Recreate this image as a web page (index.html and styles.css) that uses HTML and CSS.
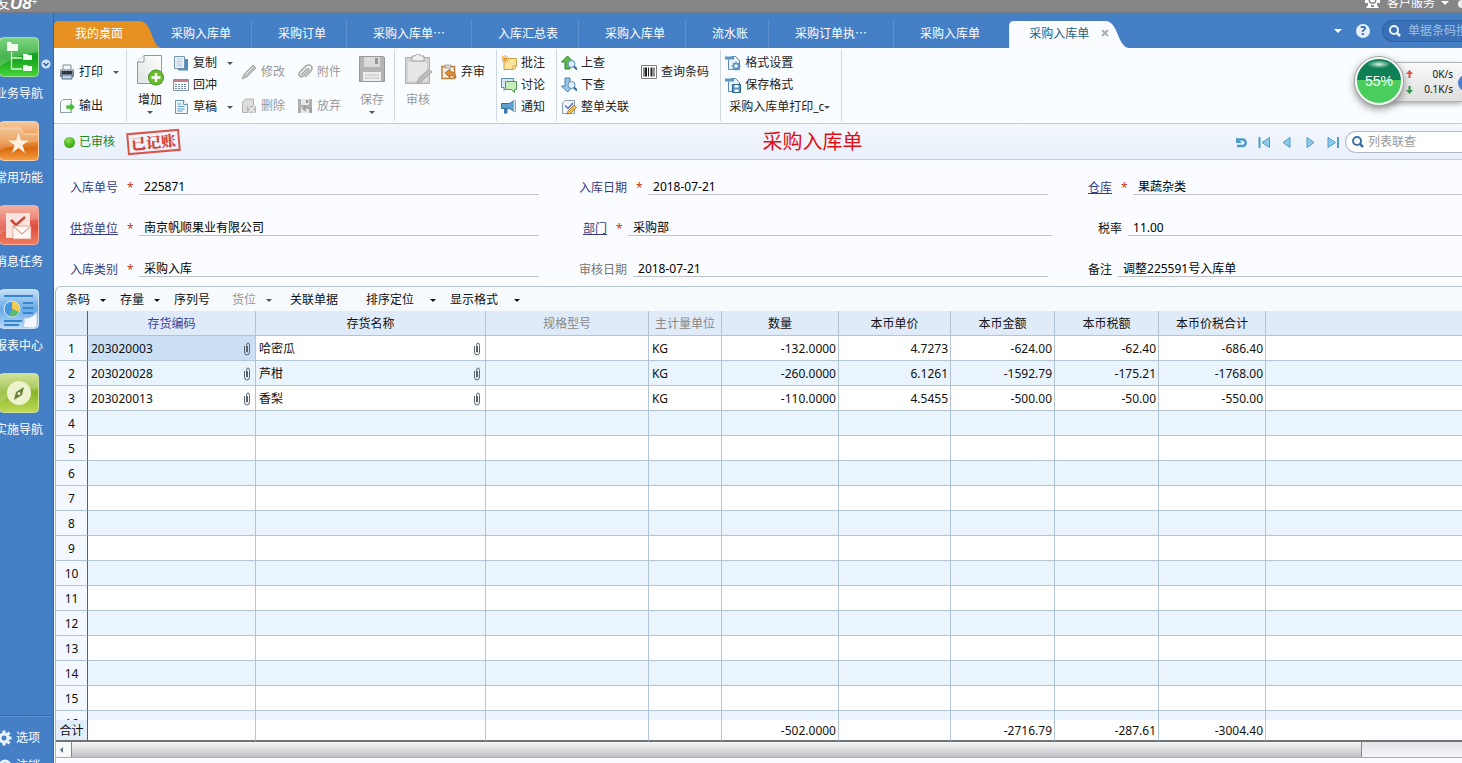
FILE: index.html
```html
<!DOCTYPE html>
<html lang="zh-CN">
<head>
<meta charset="utf-8">
<title>采购入库单</title>
<link rel="stylesheet" href="styles.css">
</head>
<body>
<header class="topbar">
  <div class="brand">友<b>U8</b><sup>+</sup></div>
  <button class="service"><svg width="17" height="16" viewBox="0 0 17 16"><path d="M1 2h3v-2h9v2h3v6h-3v2l2 3H2l2-3V8H1z" fill="#fff"/><circle cx="8.500" cy="5" r="4" fill="#868686"/><circle cx="8.500" cy="5" r="2.500" fill="#fff"/><path d="M7 11h3" stroke="#868686" stroke-width="2"/></svg>客户服务<i class="caret light"></i></button>
  <span class="avatar"></span>
</header>
<div class="shell">
<aside class="side">
  <nav class="side-nav">
    <a href="#"><svg width="40" height="40" viewBox="0 0 40 40"><defs><linearGradient id="g1" x2="0" y2="1"><stop offset="0" stop-color="#5cca5e"/><stop offset=".5" stop-color="#12a01c"/><stop offset="1" stop-color="#46d53a"/></linearGradient></defs><rect x=".5" y=".5" width="39" height="39" rx="4" fill="url(#g1)" stroke="#9fe09b"/><path d="M1 1h38v14Q20 17 1 29z" fill="#fff" opacity=".22"/><path d="M8 5h4l1 2h6v7H8zM24 17h4l1 1h4v5h-9zM24 28h4l1 1h4v5h-9z" fill="#f1ffef"/><path d="M12.500 15v17H23M12.500 21H23" fill="none" stroke="#d5f5d2" stroke-width="1.300"/></svg>业务导航</a>
    <a href="#"><svg width="40" height="40" viewBox="0 0 40 40"><defs><linearGradient id="g2" x2="0" y2="1"><stop offset="0" stop-color="#f5c9a0"/><stop offset=".5" stop-color="#e98f3c"/><stop offset=".7" stop-color="#da6a10"/><stop offset="1" stop-color="#f7a043"/></linearGradient></defs><rect x=".5" y=".5" width="39" height="39" rx="4" fill="url(#g2)" stroke="#f6d0ab"/><path d="M1 7h20l4 6h14v8Q18 22 1 29z" fill="#fff" opacity=".2"/><path d="M1 7h20l4 6h14" fill="none" stroke="#f8d8b6"/><path d="M19.500 12l2.500 7.500h8l-6.500 4.500 2.500 8-6.500-5-6.500 5 2.500-8L9 19.500h8z" fill="#fff1df"/></svg>常用功能</a>
    <a href="#"><svg width="40" height="40" viewBox="0 0 40 40"><defs><linearGradient id="g3" x2="0" y2="1"><stop offset="0" stop-color="#f3a091"/><stop offset=".55" stop-color="#de4d3c"/><stop offset="1" stop-color="#f17d63"/></linearGradient></defs><rect x=".5" y=".5" width="39" height="39" rx="4" fill="url(#g3)" stroke="#f3aa9c"/><path d="M1 1h38v13Q18 16 1 30z" fill="#fff" opacity=".18"/><path d="M7 8h24v25H7z" fill="#f9e4df"/><path d="M12 15l5 5 9-8" fill="none" stroke="#cb4939" stroke-width="2.500"/><path d="M14 21h18v13H14z" fill="#fff6f2" stroke="#d88d80" stroke-width=".7"/><path d="M14 21l9 8 9-8" fill="none" stroke="#c98076"/></svg>消息任务</a>
    <a href="#"><svg width="40" height="40" viewBox="0 0 40 40"><defs><linearGradient id="g4" x2="0" y2="1"><stop offset="0" stop-color="#c5e0f8"/><stop offset=".5" stop-color="#66a9e6"/><stop offset="1" stop-color="#b9dbf8"/></linearGradient></defs><rect x=".5" y=".5" width="39" height="39" rx="4" fill="url(#g4)" stroke="#cae1f6"/><path d="M5 7h29M24 14h10M24 19h10M24 24h10M5 32h18M5 36h15" stroke="#3b85cf" stroke-width="2"/><circle cx="13" cy="20" r="8" fill="#4597e0" stroke="#e4f2ff"/><path d="M13 20V12a8 8 0 0 1 7 11z" fill="#f2ca4e"/><path d="M13 20l7 3q-3 6-10 4z" fill="#5fba72"/><path d="M24 38q2-4 1-9 8 1 13-6v12q0 4-4 4z" fill="#f2f8fe" stroke="#9dbddd" stroke-width=".6"/></svg>报表中心</a>
    <a href="#"><svg width="40" height="40" viewBox="0 0 40 40"><defs><linearGradient id="g5" x2="0" y2="1"><stop offset="0" stop-color="#c8dd83"/><stop offset=".5" stop-color="#8bb52b"/><stop offset="1" stop-color="#c0da54"/></linearGradient></defs><rect x=".5" y=".5" width="39" height="39" rx="4" fill="url(#g5)" stroke="#cfdf9c"/><path d="M1 1h38v14Q18 17 1 29z" fill="#fff" opacity=".18"/><circle cx="20" cy="20" r="12" fill="#eef3cf"/><path d="M25 14l-2 8-8 5 2-8z" fill="#66803a"/><circle cx="20" cy="20.500" r="1.500" fill="#eef3cf"/></svg>实施导航</a>
  </nav>
  <button class="side-more" aria-label="展开"><svg width="10" height="10" viewBox="0 0 10 10"><circle cx="5" cy="5" r="4.500" fill="#cfe3f8"/><path d="M2.500 4L5 6.500 7.500 4" fill="none" stroke="#2b609e" stroke-width="1.500"/></svg></button>
  <div class="side-foot">
    <a href="#"><svg width="14" height="16" viewBox="0 0 14 16"><circle cx="4" cy="8" r="4" fill="none" stroke="#eaf4ff" stroke-width="3"/><path d="M4 .5v3M4 12.500v3M7.500 4.500l2-2M7.500 11.500l2 2M8.500 8h3" stroke="#eaf4ff" stroke-width="3"/></svg>选项</a>
    <a href="#"><svg width="14" height="16" viewBox="0 0 14 16"><circle cx="5" cy="8" r="5" fill="none" stroke="#eaf4ff" stroke-width="3"/></svg>注销</a>
  </div>
</aside>
<main class="main">
  <div class="tabstrip">
    <nav class="tabs">
      <button class="tab home">我的桌面</button>
      <button class="tab">采购入库单</button>
      <button class="tab">采购订单</button>
      <button class="tab long">采购入库单…</button>
      <button class="tab">入库汇总表</button>
      <button class="tab">采购入库单</button>
      <button class="tab">流水账</button>
      <button class="tab long">采购订单执…</button>
      <button class="tab last">采购入库单</button>
      <button class="tab active">采购入库单<svg width="8" height="8" viewBox="0 0 8 8"><path d="M1 1l6 6M7 1L1 7" stroke="#a9b0b6" stroke-width="2"/></svg></button>
    </nav>
    <div class="strip-tools">
      <button aria-label="更多标签"><i class="caret light"></i></button>
      <button aria-label="帮助" class="help">?</button>
      <label class="search dark"><svg width="14" height="14" viewBox="0 0 14 14"><circle cx="6" cy="6" r="4" fill="none" stroke="#eaf4ff" stroke-width="2"/><path d="M9 9l3 3" stroke="#eaf4ff" stroke-width="2.500"/></svg><input type="text" placeholder="单据条码搜索" aria-label="单据条码搜索"></label>
    </div>
  </div>

  <div class="ribbon">
    <div class="group print">
      <div class="two">
        <button class="tool"><svg width="16" height="16" viewBox="0 0 16 16"><path d="M4 1h8v5H4z" fill="#f4f7fa" stroke="#7d8894"/><path d="M1 5h14v8H1z" fill="#7d8996"/><path d="M1 5h14v2H1z" fill="#a5afb9"/><path d="M3 7h10v3H3z" fill="#2f363d"/><path d="M3 11h10v4H3z" fill="#b9d2ec" stroke="#5c6c7e"/></svg>打印<i class="caret"></i></button>
        <button class="tool"><svg width="16" height="16" viewBox="0 0 16 16"><path d="M4 1.500h8.500v13H1.500V4z" fill="#f6fafc" stroke="#8ba0b0"/><path d="M7 7h4V4l5 5-5 5v-3H7z" fill="#4bbb3b" stroke="#dff3da" stroke-width=".7"/></svg>输出</button>
      </div>
    </div>
    <div class="group edit">
      <button class="big"><svg width="28" height="32" viewBox="0 0 28 32"><defs><linearGradient id="pg" x1="1" x2="0" y2="1"><stop offset="0" stop-color="#fff"/><stop offset="1" stop-color="#dfe3e3"/></linearGradient></defs><path d="M8 1.500h17.500v28h-24V8z" fill="url(#pg)" stroke="#8f999e"/><path d="M8 1.500V8H1.500" fill="#fff" stroke="#8f999e"/><circle cx="20" cy="23.500" r="7.500" fill="#69bd2b" stroke="#3c961b"/><path d="M20 19v9M15.500 23.500h9" stroke="#fff" stroke-width="2.500"/></svg>增加<i class="caret"></i></button>
      <div class="three">
        <button class="tool"><svg width="16" height="16" viewBox="0 0 16 16"><path d="M5 4h10v11.500H5z" fill="#4d8ac0"/><path d="M1.500 1.500h10v12h-10z" fill="#eef5fb" stroke="#7292b0"/><path d="M3.500 4h6M3.500 6.500h6M3.500 9h6M3.500 11h6" stroke="#a9c5df"/></svg>复制<i class="caret"></i></button>
        <button class="tool"><svg width="16" height="16" viewBox="0 0 16 16"><path d="M.5 2.500h15v11H.5z" fill="#fff" stroke="#8095a8"/><path d="M1 4h14" stroke="#c47c8d" stroke-width="2"/><path d="M2 7.500h12M2 9.500h12M2 11.500h12" stroke="#6d87b1" stroke-dasharray="2 1"/></svg>回冲</button>
        <button class="tool"><svg width="16" height="16" viewBox="0 0 16 16"><path d="M2.500 1.500h8l4 4v9h-12z" fill="#eef6fc" stroke="#6893b5"/><path d="M10.500 1.500v4h4" fill="#fff" stroke="#6893b5"/><path d="M4.500 5h4M4.500 7.500h7M4.500 10h7M4.500 12h5" stroke="#5a9bcb"/></svg>草稿<i class="caret"></i></button>
      </div>
      <div class="two gap-s">
        <button class="tool" disabled><svg width="16" height="16" viewBox="0 0 16 16"><path d="M1 15l2-5 9-9 3 3-9 9z" fill="#bcbcbc" stroke="#a0a0a0" stroke-width=".8"/><path d="M4 11l8-8" stroke="#e6e6e6"/></svg>修改</button>
        <button class="tool" disabled><svg width="16" height="16" viewBox="0 0 16 16"><path d="M1.500 4l3-3h8v13.500h-11z" fill="#ddd" stroke="#b3b3b3"/><path d="M6 8h9v7H6z" fill="#bbb"/><path d="M7.500 8.500l6 6M13.500 8.500l-6 6" stroke="#f1f1f1" stroke-width="1.500"/></svg>删除</button>
      </div>
      <div class="two gap-m">
        <button class="tool" disabled><svg width="16" height="16" viewBox="0 0 16 16"><path d="M4 11l6-6q2-1 2 1l-6 6q-3 2-4-1 0-2 1-3l6-6q3-2 5 0t0 5l-6 6" fill="none" stroke="#aaa" stroke-width="1.700"/></svg>附件</button>
        <button class="tool" disabled><svg width="16" height="16" viewBox="0 0 16 16"><path d="M1 1h14v14H1z" fill="#aeaeae"/><path d="M4 1h8v6H4zM4 9h8v6H4z" fill="#e7e7e7"/><path d="M9 2h2v3H9z" fill="#999"/><path d="M7 10h5q3 0 2 4M9 8l-3 2.500L9 13" stroke="#999" fill="none" stroke-width="1.500"/></svg>放弃</button>
      </div>
      <button class="big gap-l" disabled><svg width="28" height="32" viewBox="0 0 28 32"><path d="M1.500 2.500h24l1 1v24h-25z" fill="#b4b4b4" stroke="#999"/><path d="M6 3h16v10H6z" fill="#dadada"/><path d="M17 4h3v6h-3z" fill="#969696"/><path d="M5 18h18v9H5z" fill="#ededed"/><path d="M7 21h14M7 24h14" stroke="#c2c2c2"/></svg>保存<i class="caret"></i></button>
    </div>
    <div class="group audit">
      <button class="big" disabled><svg width="28" height="32" viewBox="0 0 28 32"><path d="M1.500 3.500h24v26h-24z" fill="#d2d2d2" stroke="#b0b0b0"/><path d="M4 8h19v19H4z" fill="#e6e6e6"/><path d="M8 2h3l2-2h2l2 2h3v5H8z" fill="#efefef" stroke="#a0a0a0"/><path d="M13 29l2-5 10-9 3 3-10 9z" fill="#bcbcbc" stroke="#aaa"/></svg>审核</button>
      <div class="two"><button class="tool"><svg width="16" height="16" viewBox="0 0 16 16"><path d="M1 2.500h12.500v12H1z" fill="#f7ede0" stroke="#b97b3a" stroke-width="1.500"/><path d="M4 1h6v3H4z" fill="#ddd" stroke="#8b8175" stroke-width=".7"/><path d="M4 9l5-4v2.500q6 0 6 6.500-2-3-6-2.500V14z" fill="#dc8c32" stroke="#985015" stroke-width=".6"/></svg>弃审</button></div>
    </div>
    <div class="group">
      <div class="three">
        <button class="tool"><svg width="16" height="16" viewBox="0 0 16 16"><path d="M3 3.500h12.500v8l-3 3H3z" fill="#fbe49a" stroke="#c4a048"/><path d="M12 14v-3h3" fill="#fff" stroke="#c4a048"/><path d="M4 0v8M0 4h8M1 1l6 6M7 1L1 7" stroke="#ee9a2b"/></svg>批注</button>
        <button class="tool"><svg width="16" height="16" viewBox="0 0 16 16"><path d="M.5 1.500h12v9H6l-3 3v-3H.500z" fill="#d6e8f3" stroke="#5c8fac"/><path d="M4.500 4.500h11v8h-2v3l-3-3h-6z" fill="#c5edb7" stroke="#4f9c54"/></svg>讨论</button>
        <button class="tool"><svg width="16" height="16" viewBox="0 0 16 16"><path d="M.5 4.500h8l4-2.500v10l-4-2.500h-8z" fill="#5f9fce" stroke="#336e9e"/><path d="M3 9.500h3.500v5H3z" fill="#3978a8"/><path d="M12.500 1.500h2v11h-2z" fill="#dfe9f0" stroke="#8fabc0"/></svg>通知</button>
      </div>
    </div>
    <div class="group">
      <div class="three">
        <button class="tool"><svg width="16" height="16" viewBox="0 0 16 16"><path d="M6.500 1l6 6H9v7H4V7H.500z" fill="#63b84d" stroke="#33832f"/><circle cx="10.500" cy="9" r="3.500" fill="#dcecf8" stroke="#5d8fba"/><path d="M13 11.500l3 3" stroke="#33669a" stroke-width="2"/></svg>上查</button>
        <button class="tool"><svg width="16" height="16" viewBox="0 0 16 16"><path d="M6.500 15l-6-6H4V1h5v8h3.500z" fill="#9bc4e6" stroke="#477eac"/><circle cx="10.500" cy="8" r="3.500" fill="#e5f1fa" stroke="#5d8fba"/><path d="M13 10.500l3 3" stroke="#33669a" stroke-width="2"/></svg>下查</button>
        <button class="tool"><svg width="16" height="16" viewBox="0 0 16 16"><path d="M4 1.500h9.500v13h-12V4z" fill="#f3f5f8" stroke="#8e9cad"/><path d="M4 6.500l3 3L12 4" fill="none" stroke="#5a72c4" stroke-width="1.500"/><path d="M6 15l1-3 6-6 2.500 2.500-6 6z" fill="#ebb94b" stroke="#987329" stroke-width=".7"/></svg>整单关联</button>
      </div>
      <div class="two gap-m"><button class="tool"><svg width="16" height="16" viewBox="0 0 16 16"><path d="M.5 1.500h15v13H.5z" fill="#fff" stroke="#7d7d7d"/><path d="M3 3.500v9M7.500 3.500v9M13 3.500v9" stroke="#222"/><path d="M5 3.500v9M10.500 3.500v9" stroke="#222" stroke-width="2"/></svg>查询条码</button></div>
    </div>
    <div class="group">
      <div class="three">
        <button class="tool"><svg width="16" height="16" viewBox="0 0 16 16"><path d="M3.500 4.500v10h11v-9l-4-4h-4" fill="#eaf3fa" stroke="#5a87ab"/><path d="M0 1.500h9v3H0z" fill="#5b96c2"/><circle cx="11" cy="11" r="2.500" fill="#fff" stroke="#5a94c0" stroke-width="1.500"/><path d="M11 6.500v2M11 13.500v2M6.500 11h2M13.500 11h2M8 8l1 1M13 13l1 1M14 8l-1 1M9 13l-1 1" stroke="#5a94c0" stroke-width="1.500"/></svg>格式设置</button>
        <button class="tool"><svg width="16" height="16" viewBox="0 0 16 16"><path d="M3.500 4.500v10h11v-9l-4-4h-4" fill="#eaf3fa" stroke="#5a87ab"/><path d="M0 1.500h9v3H0z" fill="#5b96c2"/><path d="M7.500 7.500h8v8h-8z" fill="#5795c4" stroke="#2b638f"/><path d="M9.500 8h4v2.500h-4zM9.500 12.500h4V15h-4z" fill="#fff"/></svg>保存格式</button>
        <button class="tool template">采购入库单打印_c<i class="caret"></i></button>
      </div>
    </div>
  </div>

  <div class="status">
    <div class="state"><i class="dot"></i><span>已审核</span><strong class="stamp">已记账</strong></div>
    <h1>采购入库单</h1>
    <div class="pager">
      <button aria-label="刷新"><svg width="14" height="14" viewBox="0 0 14 14"><path d="M4 4.500h4.500a3 3 0 0 1 0 6.500H3" fill="none" stroke="#4e9ac6" stroke-width="2.500"/><path d="M2 2v6h6z" fill="#4e9ac6"/></svg></button>
      <button aria-label="首张"><svg width="14" height="14" viewBox="0 0 14 14"><path d="M2.500 2v11" stroke="#4e9ac6" stroke-width="2"/><path d="M12.500 2.500v10L5 7.500z" fill="#8ccbec" stroke="#4e9ac6"/></svg></button>
      <button aria-label="上张"><svg width="14" height="14" viewBox="0 0 14 14"><path d="M10 2.500v10L3 7.500z" fill="#8ccbec" stroke="#4e9ac6"/></svg></button>
      <button aria-label="下张"><svg width="14" height="14" viewBox="0 0 14 14"><path d="M4 2.500v10l7-5z" fill="#8ccbec" stroke="#4e9ac6"/></svg></button>
      <button aria-label="末张"><svg width="14" height="14" viewBox="0 0 14 14"><path d="M12 2v11" stroke="#4e9ac6" stroke-width="2"/><path d="M2 2.500v10l7.500-5z" fill="#8ccbec" stroke="#4e9ac6"/></svg></button>
      <label class="search pale"><svg width="14" height="14" viewBox="0 0 14 14"><circle cx="6" cy="6" r="4" fill="none" stroke="#3a72a3" stroke-width="2"/><path d="M9 9l3 3" stroke="#3a72a3" stroke-width="2.500"/></svg><input type="text" placeholder="列表联查" aria-label="列表联查"></label>
    </div>
  </div>

  <form class="form">
    <div class="field"><label for="f1">入库单号</label><em>*</em><input id="f1" type="text" value="225871"></div>
    <div class="field"><label for="f2">入库日期</label><em>*</em><input id="f2" type="text" value="2018-07-21"></div>
    <div class="field"><label for="f3" class="link">仓库</label><em>*</em><input id="f3" type="text" value="果蔬杂类"></div>
    <div class="field"><label for="f4" class="link">供货单位</label><em>*</em><input id="f4" type="text" value="南京帆顺果业有限公司"></div>
    <div class="field inset-s"><label for="f5" class="link">部门</label><em>*</em><input id="f5" type="text" value="采购部"></div>
    <div class="field inset-m"><label for="f6" class="plain">税率</label><input id="f6" type="text" value="11.00"></div>
    <div class="field"><label for="f7">入库类别</label><em>*</em><input id="f7" type="text" value="采购入库"></div>
    <div class="field"><label for="f8" class="muted">审核日期</label><input id="f8" type="text" value="2018-07-21"></div>
    <div class="field"><label for="f9" class="plain">备注</label><input id="f9" type="text" value="调整225591号入库单"></div>
  </form>

  <section class="panel">
    <div class="gridbar">
      <button>条码<i class="caret dark"></i></button>
      <button>存量<i class="caret dark"></i></button>
      <button>序列号</button>
      <button class="sp-m" disabled>货位<i class="caret"></i></button>
      <button class="sp-s">关联单据</button>
      <button class="sp-l wide">排序定位<i class="caret dark"></i></button>
      <button class="wide">显示格式<i class="caret dark"></i></button>
    </div>
    <div class="gridwrap">
      <table class="grid">
        <colgroup><col class="c-no"><col class="c-code"><col class="c-name"><col class="c-spec"><col class="c-unit"><col class="c-qty"><col class="c-price"><col class="c-amt"><col class="c-amt"><col class="c-sum"><col></colgroup>
        <thead><tr><th></th><th class="key">存货编码</th><th>存货名称</th><th class="muted">规格型号</th><th class="muted">主计量单位</th><th>数量</th><th>本币单价</th><th>本币金额</th><th>本币税额</th><th>本币价税合计</th><th></th></tr></thead>
        <tbody>
          <tr><th>1</th><td class="sel"><div>203020003<svg class="clip"><use href="#clip"/></svg></div></td><td><div>哈密瓜<svg class="clip"><use href="#clip"/></svg></div></td><td></td><td>KG</td><td>-132.0000</td><td>4.7273</td><td>-624.00</td><td>-62.40</td><td>-686.40</td><td></td></tr>
          <tr><th>2</th><td><div>203020028<svg class="clip"><use href="#clip"/></svg></div></td><td><div>芦柑<svg class="clip"><use href="#clip"/></svg></div></td><td></td><td>KG</td><td>-260.0000</td><td>6.1261</td><td>-1592.79</td><td>-175.21</td><td>-1768.00</td><td></td></tr>
          <tr><th>3</th><td><div>203020013<svg class="clip"><use href="#clip"/></svg></div></td><td><div>香梨<svg class="clip"><use href="#clip"/></svg></div></td><td></td><td>KG</td><td>-110.0000</td><td>4.5455</td><td>-500.00</td><td>-50.00</td><td>-550.00</td><td></td></tr>
          <tr><th>4<td><td><td><td><td><td><td><td><td><td>
          <tr><th>5<td><td><td><td><td><td><td><td><td><td>
          <tr><th>6<td><td><td><td><td><td><td><td><td><td>
          <tr><th>7<td><td><td><td><td><td><td><td><td><td>
          <tr><th>8<td><td><td><td><td><td><td><td><td><td>
          <tr><th>9<td><td><td><td><td><td><td><td><td><td>
          <tr><th>10<td><td><td><td><td><td><td><td><td><td>
          <tr><th>11<td><td><td><td><td><td><td><td><td><td>
          <tr><th>12<td><td><td><td><td><td><td><td><td><td>
          <tr><th>13<td><td><td><td><td><td><td><td><td><td>
          <tr><th>14<td><td><td><td><td><td><td><td><td><td>
          <tr><th>15<td><td><td><td><td><td><td><td><td><td>
          <tr><th>16<td><td><td><td><td><td><td><td><td><td>
        </tbody>
        <tfoot><tr><th>合计</th><td></td><td></td><td></td><td></td><td>-502.0000</td><td></td><td>-2716.79</td><td>-287.61</td><td>-3004.40</td><td></td></tr></tfoot>
      </table>
    </div>
    <div class="scroll"><button aria-label="向左滚动"><svg width="6" height="8" viewBox="0 0 6 8"><path d="M4 1v6L1 4z" fill="#5a7184"/></svg></button><span class="thumb"></span></div>
  </section>
</main>
</div>

<div class="monitor">
  <div class="rates">
    <span><svg width="7" height="9" viewBox="0 0 7 9"><path d="M3.500 8V3" stroke="#d9503f" stroke-width="2"/><path d="M0 4l3.500-4L7 4z" fill="#d9503f"/></svg><b>0K/s</b></span>
    <span><svg width="7" height="9" viewBox="0 0 7 9"><path d="M3.500 1v5" stroke="#2f8f4a" stroke-width="2"/><path d="M0 5l3.500 4L7 5z" fill="#2f8f4a"/></svg><b>0.1K/s</b></span>
    <i class="knob"></i>
  </div>
  <div class="ball">55%</div>
</div>

<svg class="defs" aria-hidden="true"><symbol id="clip" viewBox="0 0 8 14"><path d="M1.500 4v6q0 3 2.500 3t2.500-3V3.500Q6.500 1 5 1T3.500 3.500V10h1V4" fill="none" stroke="#56636e"/></symbol></svg>
</body>
</html>
```
FILE: styles.css
```css
* { box-sizing: border-box; }
body {
  margin: 0;
  height: 100vh;
  display: flex;
  flex-direction: column;
  overflow: hidden;
  position: relative;
  background: #fafcff;
  color: #111;
  font: 12px/16px "Noto Sans", "Noto Sans CJK SC", sans-serif;
}
button, input { font: inherit; color: inherit; padding: 0; border: 0; background: none; }
button { display: flex; align-items: center; white-space: nowrap; }
a { color: inherit; text-decoration: none; }
svg { display: block; flex: none; }
.defs { display: none; }

.caret {
  flex: none;
  border: 3px solid transparent;
  border-top-color: #555;
  border-bottom: 0;
}
.caret.light { border-width: 4px 4px 0; border-top-color: #fff; }
.caret.dark { border-top-color: #111; }

.topbar {
  flex: none;
  height: 13px;
  display: flex;
  justify-content: space-between;
  overflow: hidden;
  background: #868686;
  border-bottom: 1px solid #6f7982;
  color: #fff;
}
.brand { margin-left: -4px; margin-top: -5px; font-size: 14px; display: flex; }
.brand b { font: italic bold 17px/18px "Liberation Sans", sans-serif; }
.brand sup { font-size: 10px; line-height: 12px; }
.service { margin-left: auto; margin-top: -5px; height: 16px; gap: 6px; }
.avatar { width: 4px; height: 8px; margin-left: 9px; border-radius: 4px 0 0 4px; background: #eee; }

.shell { flex: 1; display: flex; min-height: 0; }
.side {
  position: relative;
  flex: none;
  width: 54px;
  display: flex;
  flex-direction: column;
  justify-content: space-between;
  overflow: hidden;
  background: #4580c6;
  border-right: 1px solid #2f68a8;
  color: #fff;
}
.side-nav { display: flex; flex-direction: column; gap: 19px; padding-top: 24px; width: 38px; }
.side-nav a { display: flex; flex-direction: column; align-items: center; gap: 9px; white-space: nowrap; }
.side-more { position: absolute; left: 41px; top: 46px; }
.side-foot {
  flex: none;
  height: 48px;
  border-top: 1px solid #356ba9;
  box-shadow: inset 0 1px #5c93d3;
  padding-top: 14px;
  display: flex;
  flex-direction: column;
  gap: 12px;
}
.side-foot a { display: flex; gap: 2px; align-items: center; }

.main { flex: 1; min-width: 0; display: flex; flex-direction: column; }
.tabstrip {
  flex: none;
  height: 35px;
  display: flex;
  justify-content: space-between;
  align-items: flex-end;
  background: #4580c6;
  color: #fff;
}
.tabs { display: flex; font-family: "Noto Sans CJK SC", sans-serif; }
.tab { height: 27px; padding: 0 20px 3px 26px; border-right: 1px solid #5c90ce; }
.tab.long { padding-right: 26px; }
.tab.last { padding-right: 29px; border: 0; }
.tab.home {
  width: 108px;
  margin-right: -17px;
  padding-left: 21px;
  border: 0;
  background: #e69021;
  clip-path: path("M0 27V5Q0 0 5 0H85C99 0 96 23 107 27Z");
}
.tab.active {
  width: 120px;
  padding-left: 20px;
  gap: 12px;
  border: 0;
  background: #fafcff;
  color: #17617f;
  clip-path: path("M0 27V5Q0 0 5 0H96C109 0 108 24 119 27Z");
}
.strip-tools { display: flex; align-items: center; gap: 12px; height: 27px; padding-bottom: 7px; }
.help {
  width: 14px;
  height: 14px;
  justify-content: center;
  margin-left: 2px;
  border-radius: 50%;
  background: #e3effb;
  color: #2f62a0;
  font-weight: bold;
  line-height: 14px;
}
.search { display: flex; align-items: center; gap: 6px; height: 22px; padding-left: 5px; border-radius: 11px 0 0 11px; }
.search input { width: 100%; min-width: 0; outline: 0; }
.search.dark { width: 80px; background: #3a70b5; border: 1px solid #2f62a3; border-right: 0; }
.search.dark input::placeholder { color: #9ac1ec; }
.search.pale { width: 117px; gap: 3px; background: #fff; border: 1px solid #b3bdc8; border-right: 0; }
.search.pale input::placeholder { color: #999; }

.ribbon {
  flex: none;
  display: flex;
  height: 76px;
  border-bottom: 1px solid #b9cbdc;
  background: #fafdff;
  color: #222;
}
.group {
  display: flex;
  align-items: flex-start;
  padding: 1px 11px 0 4px;
  margin: 2px 0;
  border-right: 1px solid #cfd8e0;
}
.group.print { padding-left: 5px; padding-right: 7px; }
.group.edit { padding-left: 9px; padding-right: 8px; }
.group.audit { padding-left: 9px; }
.group button:disabled { color: #999; }
.three { padding-top: 1px; }
.two { padding-top: 4px; }
.tool { gap: 4px; height: 22px; }
.two .tool { height: 34px; }
.tool .caret { margin-left: 6px; }
.tool.template { gap: 0; padding-left: 4px; }
.tool.template .caret { margin-left: 0; }
.big { flex-direction: column; width: 28px; height: 64px; padding-top: 3px; }
.big svg { margin-bottom: 6px; }
.big .caret { margin-top: 3px; }
.big + .three, .big + .two { margin-left: 9px; }
.gap-s { margin-left: 8px; }
.gap-m { margin-left: 12px; }
.gap-l { margin-left: 17px; }

.status {
  flex: none;
  display: grid;
  grid-template-columns: 709fr auto 600fr;
  align-items: center;
  height: 36px;
  padding-top: 1px;
  border-bottom: 1px solid #c3d0df;
  background: linear-gradient(#f3f7fd, #e9f0fa);
}
.state { display: flex; align-items: center; gap: 4px; padding-left: 10px; color: #23862b; }
.dot { width: 11px; height: 11px; border-radius: 50%; background: radial-gradient(circle at 40% 30%, #8fe05a, #38a80d 70%); }
.stamp {
  margin-left: 8px;
  padding: 0 2px;
  border: 2px solid #d8564e;
  color: #d3443c;
  font: 900 15px/18px "Noto Serif CJK SC", "Noto Sans CJK SC", serif;
  transform: rotate(-5deg);
}
.status h1 { margin: 0; color: #e00d15; font-size: 20px; line-height: 28px; font-weight: normal; }
.pager { display: flex; align-items: center; justify-content: flex-end; gap: 9px; }
.pager .search { margin-left: -4px; }

.form {
  flex: none;
  display: grid;
  grid-template-columns: 469fr 469fr 374fr;
  gap: 24px 40px;
  padding: 18px 0 9px 16px;
}
.field { display: flex; height: 17px; padding-top: 2px; min-width: 0; white-space: nowrap; color: #000; }
.field label { color: #363c84; padding-right: 9px; }
.field .link { text-decoration: underline; padding-right: 0; margin-right: 9px; }
.field .plain { color: #111; padding-right: 6px; }
.field .muted { color: #777; padding-right: 6px; }
.field em { width: 6px; margin-right: 6px; color: #c03a20; font-style: normal; }
.field input { flex: 1; min-width: 0; padding-left: 5px; border-bottom: 1px solid #bfc3c7; outline: 0; }
.field.inset-s { padding-left: 4px; margin-right: -4px; }
.field.inset-m { padding-left: 10px; }

.panel {
  flex: 1;
  min-height: 0;
  display: flex;
  flex-direction: column;
  margin-left: 1px;
  padding-bottom: 5px;
  border-top: 1px solid #b4c3cf;
  border-left: 1px solid #a9bccb;
  border-top-left-radius: 6px;
}
.gridbar { flex: none; display: flex; gap: 14px; height: 24px; padding: 2px 0 0 10px; background: #f7fafd; border-top-left-radius: 6px; }
.gridbar button { gap: 10px; }
.gridbar .wide { gap: 16px; }
.gridbar button:disabled { color: #999; }
.sp-s { margin-left: 4px; }
.sp-m { margin-left: 8px; }
.sp-l { margin-left: 14px; }

.gridwrap { flex: 1; min-height: 0; overflow: hidden; background: #fff; }
.grid { width: 100%; table-layout: fixed; border-collapse: separate; border-spacing: 0; }
.c-no { width: 32px; }
.c-code { width: 168px; }
.c-name { width: 230px; }
.c-spec { width: 163px; }
.c-unit { width: 73px; }
.c-qty { width: 117px; }
.c-price { width: 112px; }
.c-amt { width: 104px; }
.c-sum { width: 107px; }
.grid th, .grid td {
  height: 25px;
  padding: 2px 2px 0;
  border-right: 1px solid #b1c5d6;
  border-bottom: 1px solid #b1c5d6;
  font-weight: normal;
  white-space: nowrap;
}
.grid th:last-child, .grid td:last-child { border-right: 0; }
.grid thead th { background: #e0ebf9; }
.grid thead .key { color: #3a3e9c; }
.grid thead .muted { color: #888; }
.grid tbody th { background: #f2f8fe; }
.grid tr > th:first-child { border-right-color: #56616c; }
.grid td:nth-child(n+6) { text-align: right; }
.grid td:nth-child(-n+5) { padding-left: 3px; }
.grid tbody tr:nth-child(even) td { background: #e9f4fd; }
.grid tbody .sel { background: #cbdff5; }
.grid td div { display: flex; align-items: center; justify-content: space-between; }
.clip { width: 8px; height: 14px; margin-right: 2px; }
.grid tfoot { position: sticky; bottom: 0; }
.grid tfoot th, .grid tfoot td { height: 22px; background: #fff; border-bottom: 2px solid #6f7479; }
.grid tfoot th { background: #e3edf9; padding: 2px 0 0; }
.scroll {
  flex: none;
  display: flex;
  height: 16px;
  border-bottom: 1px solid #a9adb1;
  background: linear-gradient(#e2e4e8, #f4f5f8);
}
.scroll button { width: 15px; padding-right: 4px; justify-content: center; background: #f5f7f9; }
.thumb { width: 1291px; max-width: 92%; border: solid #85898e; border-width: 0 1px; background: linear-gradient(#f6f6f7, #c1c2c5); }

.monitor { position: absolute; right: 0; top: 56px; width: 109px; height: 52px; }
.rates {
  position: absolute;
  inset: 6px 0 6px 30px;
  display: flex;
  flex-direction: column;
  justify-content: center;
  padding: 0 9px 0 22px;
  overflow: hidden;
  border: 1px solid #b4b4b4;
  border-right: 0;
  background: linear-gradient(#fafafa, #dedede);
  box-shadow: 0 2px 5px #aaa;
  font-size: 10px;
  line-height: 15px;
  color: #111;
}
.rates span { display: flex; align-items: center; justify-content: space-between; }
.rates b { font-weight: normal; }
.knob { position: absolute; right: -12px; top: 12px; width: 16px; height: 16px; border-radius: 50%; background: #4b7fd0; }
.ball {
  position: absolute;
  left: 2px;
  top: 1px;
  width: 48px;
  height: 48px;
  border: 2px solid #f3f6f4;
  border-radius: 50%;
  background: radial-gradient(ellipse 12px 4px at 50% 12%, #d6f2e2, transparent), linear-gradient(#0f7f56 0 47%, #49cd5c 47%);
  box-shadow: 0 0 0 1px #9aa5a0, 0 3px 8px #777;
  color: #fff;
  font: 14px/44px "Liberation Sans", sans-serif;
  text-align: center;
}
```
